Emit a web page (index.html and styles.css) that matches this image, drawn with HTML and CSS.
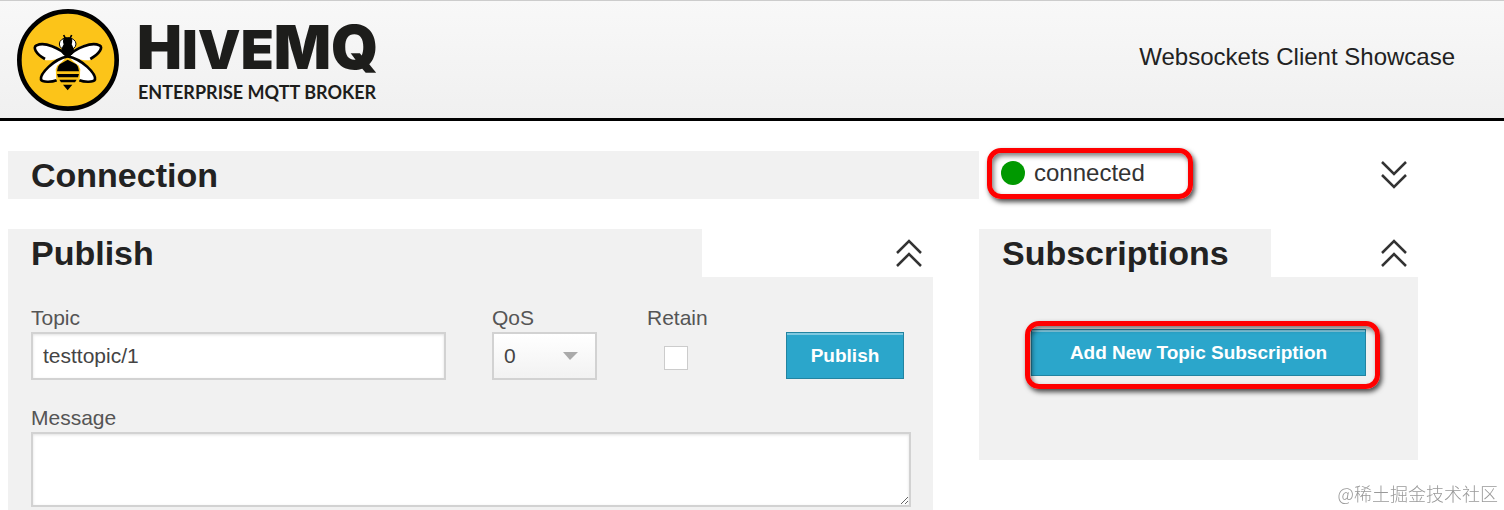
FILE: index.html
```html
<!DOCTYPE html>
<html lang="en">
<head>
<meta charset="utf-8">
<title>HiveMQ Websockets Client Showcase</title>
<link rel="stylesheet" href="styles.css">
</head>
<body>
<header class="header">
  <a class="brand" href="#">
    <svg class="bee" viewBox="22 10 306 306" aria-hidden="true">
      <circle cx="175" cy="163" r="146" fill="#fcc419" stroke="#000" stroke-width="14"/>
      <path d="M162 88l5 10M186 88l-5 10" stroke="#000" stroke-width="5" fill="none"/>
      <path d="M174 150C150 120 105 108 82 117C70 122 80 148 108 164Q140 164 174 150Z" fill="#fff"/>
      <path d="M174 150C198 120 243 108 266 117C278 122 268 148 240 164Q208 164 174 150Z" fill="#fff"/>
      <path d="M172 152C130 166 94 200 94 222C96 230 125 230 141 224L138 190Z" fill="#fff"/>
      <path d="M176 152C218 166 256 200 256 222C254 230 225 230 209 224L212 190Z" fill="#fff"/>
      <path d="M106 160C78 144 68 124 81 119C104 108 150 126 174 152M242 160C270 144 282 124 269 119C246 108 200 126 174 152" fill="none" stroke="#000" stroke-width="8"/>
      <path d="M174 152C132 160 90 205 94 222C98 230 125 230 141 224M174 152C218 160 260 205 256 222C252 230 225 230 209 224" fill="none" stroke="#000" stroke-width="8"/>
      <ellipse cx="174" cy="115" rx="25" ry="19" fill="#fff" stroke="#000" stroke-width="3"/>
      <path d="M174 96C160 94 158 105 162 116L158 124C150 138 160 150 174 154C188 150 198 138 190 124L186 116C190 105 188 94 174 96Z" fill="#000"/>
      <path d="M174 156L142 180Q134 205 145 232H205Q216 205 208 180Z" fill="#fcc419"/>
      <path d="M174 162L150 176Q142 184 142 197H208Q208 184 200 176Z" fill="#000"/>
      <path d="M142 205H208L205 215H145ZM149 222H201L196 230H154ZM160 237H188L174 254Z" fill="#000"/>
    </svg>
    <span class="wordmark">
      <span class="name">H<span class="small">IVE</span>MQ</span>
      <span class="tagline">ENTERPRISE MQTT BROKER</span>
    </span>
  </a>
  <p class="showcase">Websockets Client Showcase</p>
</header>

<main class="page">
  <section class="connection">
    <h2 class="title">Connection</h2>
    <div class="state">
      <p class="status"><span class="dot"></span>connected</p>
      <a class="toggle" href="#" aria-label="Expand connection"><svg viewBox="0 0 26 28"><path d="M1 1l12 12L25 1M1 14l12 12L25 14"/></svg></a>
    </div>
  </section>

  <div class="columns">
    <section class="panel">
      <div class="panel-head">
        <h2 class="title publish-title">Publish</h2>
        <a class="toggle" href="#" aria-label="Collapse publish"><svg viewBox="0 0 26 28"><path d="M1 14L13 2l12 12M1 27l12-12 12 12"/></svg></a>
      </div>
      <form class="panel-body form">
        <div class="row">
          <div class="field">
            <label for="topic">Topic</label>
            <input class="box" id="topic" type="text" value="testtopic/1">
          </div>
          <div class="field">
            <label for="qos">QoS</label>
            <select class="box select" id="qos"><option>0</option><option>1</option><option>2</option></select>
          </div>
          <div class="field retain">
            <label for="retain">Retain</label>
            <input class="check" id="retain" type="checkbox">
          </div>
          <button class="button" type="button">Publish</button>
        </div>
        <div class="field">
          <label for="message">Message</label>
          <textarea class="box message" id="message"></textarea>
        </div>
      </form>
    </section>

    <section class="panel">
      <div class="panel-head">
        <h2 class="title subs-title">Subscriptions</h2>
        <a class="toggle" href="#" aria-label="Collapse subscriptions"><svg viewBox="0 0 26 28"><path d="M1 14L13 2l12 12M1 27l12-12 12 12"/></svg></a>
      </div>
      <div class="panel-body subs">
        <div class="subscribe"><button class="button" type="button">Add New Topic Subscription</button></div>
      </div>
    </section>
  </div>
</main>
<p class="watermark">@稀土掘金技术社区</p>
</body>
</html>
```

FILE: styles.css
```css
* { box-sizing: border-box; }

body {
  margin: 0;
  background: #fff;
  color: #222;
  font-family: "Liberation Sans", Arial, sans-serif;
  font-size: 21px;
  line-height: 24px;
}

h2, p { margin: 0; }

.header {
  display: flex;
  justify-content: space-between;
  align-items: center;
  padding: 8px 49px 7px 17px;
  border-top: 1px solid #ccc;
  border-bottom: 3px solid #000;
  background: linear-gradient(#f8f8f8, #f0f0f0);
}

.brand {
  display: flex;
  gap: 18px;
  color: #1d1d1b;
  text-decoration: none;
}

.bee { display: block; width: 102px; height: 102px; }

.wordmark {
  display: flex;
  flex-direction: column;
  padding-top: 8px;
  white-space: nowrap;
}

.name {
  font-family: Inter, sans-serif;
  font-size: 60px;
  font-weight: 900;
  line-height: 60px;
}

.small { font-size: 54px; }

.tagline {
  padding-left: 1px;
  font-family: Lato, sans-serif;
  font-size: 18px;
  font-weight: 700;
  line-height: 24px;
}

.showcase { padding-bottom: 6px; font-size: 24px; }

.page { padding: 30px 86px 0 8px; }

.title {
  padding: 0 23px;
  background: #f1f1f1;
  font-size: 34px;
  line-height: 48px;
}

.connection {
  display: grid;
  grid-template-columns: 971fr 439fr;
  margin-bottom: 30px;
}

.state, .panel-head {
  display: flex;
  justify-content: space-between;
  align-items: center;
}

.state { padding-left: 22px; }

.status {
  position: relative;
  display: flex;
  align-items: center;
  gap: 9px;
  padding-bottom: 5px;
  color: #333;
  font-size: 24px;
}

.dot { width: 24px; height: 24px; border-radius: 50%; background: #090; }

.status::after, .subscribe::after {
  content: "";
  position: absolute;
  border: 5px solid #f00;
  border-radius: 14px;
  box-shadow: 2px 3px 5px rgba(0, 0, 0, 0.7), inset 2px 3px 5px rgba(0, 0, 0, 0.5);
  pointer-events: none;
}

.status::after { inset: -13px -48px -9px -14px; }

.toggle { margin-right: 11px; }
.toggle svg { display: block; width: 26px; height: 28px; }
.toggle path { fill: none; stroke: #333; stroke-width: 2.5; }

.columns {
  display: grid;
  grid-template-columns: 925fr 439fr;
  column-gap: 46px;
  align-items: start;
}

.publish-title { width: 75%; }
.subs-title { width: 66.6%; }
.panel-body { background: #f1f1f1; }
.form { padding: 29px 22px 4px 23px; }

.row {
  display: grid;
  grid-template-columns: minmax(0, 1fr) 105px 97px 118px;
  column-gap: 46px;
  align-items: end;
  margin-bottom: 26px;
  padding-right: 7px;
}

.row .button { margin-bottom: 1px; }

.field { display: flex; flex-direction: column; gap: 2px; color: #555; }
.retain { padding-left: 4px; align-items: flex-start; }

.box {
  width: 100%;
  height: 48px;
  padding: 0 10px;
  border: 2px solid #d2d2d2;
  border-radius: 0;
  background: #fff;
  box-shadow: inset 0 1px 3px rgba(0, 0, 0, 0.12);
  color: #444;
  font: inherit;
  outline: 0;
}

.select {
  appearance: none;
  background:
    url("data:image/svg+xml,%3Csvg xmlns='http://www.w3.org/2000/svg' width='15' height='8'%3E%3Cpath d='M0 0h15L7 8z' fill='%23aaa'/%3E%3C/svg%3E") right 17px center no-repeat,
    linear-gradient(#fff, #f2f2f2);
  box-shadow: none;
}

.message { display: block; height: 75px; resize: vertical; }

.check {
  appearance: none;
  width: 24px;
  height: 24px;
  margin: 14px 0 10px 17px;
  border: 1px solid #ccc;
  background: #fff;
}

.button {
  width: 100%;
  height: 47px;
  padding: 0;
  border: 1px solid #2284a1;
  background: #2ba6cb;
  box-shadow: inset 0 2px 0 rgba(255, 255, 255, 0.4);
  color: #fff;
  font: bold 19px/24px "Liberation Sans", Arial, sans-serif;
}

.subs { padding: 52px 52px 84px; }
.subscribe { position: relative; }
.subscribe::after { inset: -8px -14px -13px -6px; }

.watermark {
  position: fixed;
  right: 6px;
  bottom: 5px;
  color: #999;
  font-family: "Noto Sans CJK SC", sans-serif;
  font-size: 18px;
  font-weight: 300;
}
```
